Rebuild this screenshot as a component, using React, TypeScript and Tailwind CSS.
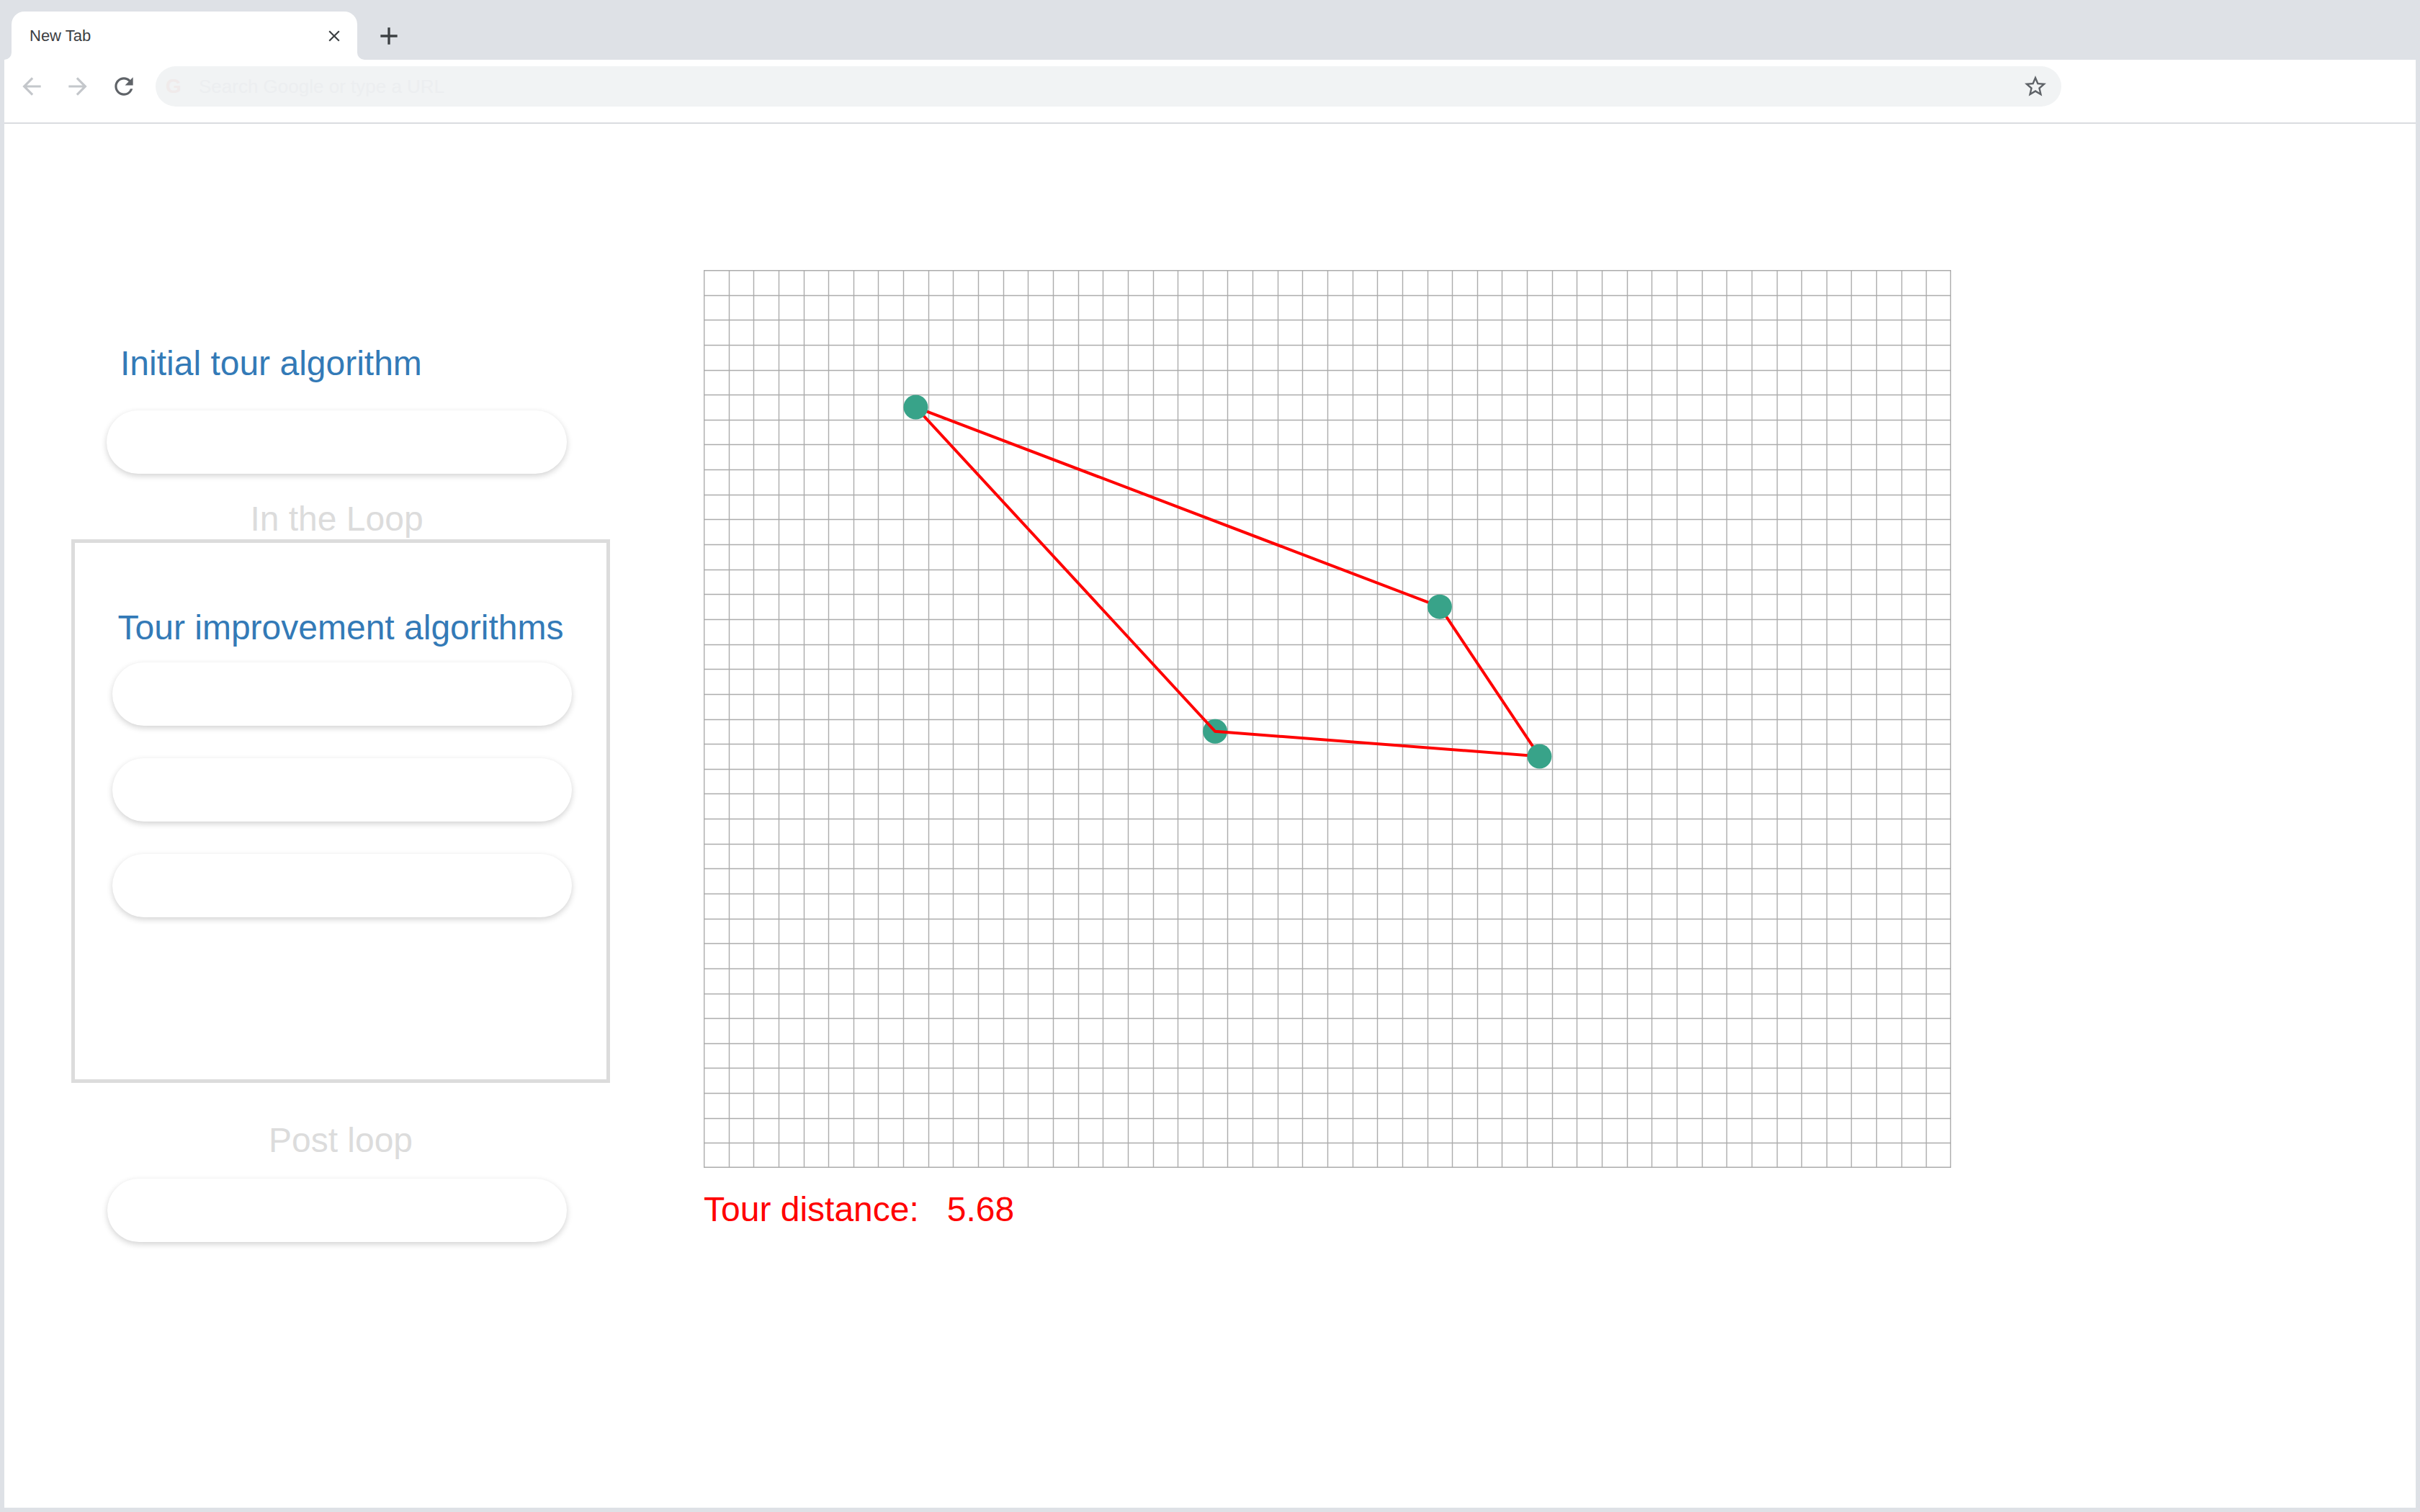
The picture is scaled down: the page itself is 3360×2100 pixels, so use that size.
import React from "react";

const W = 1732;
const H = 1247;
const COLS = 50;
const ROWS = 36;
const CW = W / COLS;
const CH = H / ROWS;

const nodes = [
  { x: 8.5, y: 5.5 },
  { x: 29.5, y: 13.5 },
  { x: 20.5, y: 18.5 },
  { x: 33.5, y: 19.5 },
];
const tour = [0, 1, 3, 2, 0];

function Grid() {
  const v = [];
  for (let i = 0; i <= COLS; i++) {
    const x = Math.min(Math.max(Math.round(i * CW) + 0.5, 0.7), W - 0.7);
    v.push(<line key={"v" + i} x1={x} y1={0} x2={x} y2={H} stroke="#acacac" strokeWidth={1.4} />);
  }
  const h = [];
  for (let j = 0; j <= ROWS; j++) {
    const y = Math.min(Math.max(Math.round(j * CH) + 0.5, 0.7), H - 0.7);
    h.push(<line key={"h" + j} x1={0} y1={y} x2={W} y2={y} stroke="#acacac" strokeWidth={1.4} />);
  }
  const px = (n: { x: number; y: number }) => [n.x * CW, n.y * CH];
  const pts = tour.map((i) => px(nodes[i]).join(",")).join(" ");
  return (
    <svg width={W} height={H} viewBox={`0 0 ${W} ${H}`} className="block">
      {v}
      {h}
      <circle cx={px(nodes[2])[0]} cy={px(nodes[2])[1]} r={17} fill="#38a389" />
      <polyline points={pts} fill="none" stroke="#ff0000" strokeWidth={4} strokeLinejoin="miter" />
      {[0, 1, 3].map((i) => (
        <circle key={i} cx={px(nodes[i])[0]} cy={px(nodes[i])[1]} r={17} fill="#38a389" />
      ))}
    </svg>
  );
}

function Pill({ className = "" }: { className?: string }) {
  return (
    <div
      className={
        "h-[88px] rounded-full bg-white shadow-[0_3px_8px_rgba(0,0,0,0.18)] " + className
      }
    />
  );
}

function Icon({ d, size, color }: { d: string; size: number; color: string }) {
  return (
    <svg width={size} height={size} viewBox="0 0 24 24" fill={color} className="block shrink-0">
      <path d={d} />
    </svg>
  );
}

const BACK = "M20 11H7.83l5.59-5.59L12 4l-8 8 8 8 1.41-1.41L7.83 13H20v-2z";
const FWD = "M12 4l-1.41 1.41L16.17 11H4v2h12.17l-5.58 5.59L12 20l8-8z";
const RELOAD =
  "M17.65 6.35A7.958 7.958 0 0012 4c-4.42 0-7.99 3.58-7.99 8s3.57 8 7.99 8c3.73 0 6.84-2.55 7.730-6h-2.08A5.99 5.99 0 0112 18c-3.31 0-6-2.69-6-6s2.69-6 6-6c1.66 0 3.14.69 4.22 1.78L13 11h7V4l-2.35 2.35z";
const STAR =
  "M22 9.24l-7.19-.62L12 2 9.19 8.63 2 9.24l5.46 4.73L5.82 21 12 17.27 18.18 21l-1.63-7.03L22 9.24zM12 15.4l-3.76 2.27 1-4.28-3.32-2.88 4.38-.38L12 6.1l1.71 4.04 4.38.38-3.32 2.88 1 4.28L12 15.4z";
const CLOSE =
  "M19 6.41L17.59 5 12 10.59 6.41 5 5 6.41 10.59 12 5 17.59 6.41 19 12 13.41 17.59 19 19 17.59 13.41 12z";
const ADD = "M19 13h-6v6h-2v-6H5v-2h6V5h2v6h6v2z";

export default function App() {
  return (
    <div className="w-[3360px] h-[2100px] bg-[#dee1e6] flex flex-col overflow-hidden font-['Liberation_Sans',Arial,sans-serif]">
      {/* Tab strip */}
      <div className="h-[83px] flex items-end pl-[16px] shrink-0">
        <div className="relative w-[480px] h-[67px] bg-white rounded-t-[18px] flex items-center pl-[25px] pr-[19px]">
          <div className="absolute left-[-10px] bottom-0 w-[10px] h-[10px] bg-white">
            <div className="w-full h-full bg-[#dee1e6] rounded-br-[10px]" />
          </div>
          <div className="absolute right-[-10px] bottom-0 w-[10px] h-[10px] bg-white">
            <div className="w-full h-full bg-[#dee1e6] rounded-bl-[10px]" />
          </div>
          <span className="text-[22px] text-[#3c4043] leading-none">New Tab</span>
          <div className="ml-auto">
            <Icon d={CLOSE} size={26} color="#3c4043" />
          </div>
        </div>
        <div className="ml-[24px] mb-[13px]">
          <Icon d={ADD} size={40} color="#3c4043" />
        </div>
      </div>

      {/* Toolbar */}
      <div className="h-[87px] mx-[6px] bg-white flex items-start pl-[19px] shrink-0">
        <div className="mt-[18px]">
          <Icon d={BACK} size={38} color="#c4c7cb" />
        </div>
        <div className="mt-[18px] ml-[26px]">
          <Icon d={FWD} size={38} color="#c4c7cb" />
        </div>
        <div className="mt-[18px] ml-[26px]">
          <Icon d={RELOAD} size={38} color="#5f6368" />
        </div>
        <div className="mt-[9px] ml-[25px] w-[2646px] h-[56px] rounded-full bg-[#f1f3f4] flex items-center pl-[14px] pr-[18px]">
          <span className="w-[30px] text-[28px] leading-none text-[#f0eaea] font-bold">G</span>
          <span className="ml-[16px] text-[26px] leading-none text-[#eceef0]">Search Google or type a URL</span>
          <div className="ml-auto">
            <Icon d={STAR} size={36} color="#5f6368" />
          </div>
        </div>
      </div>
      <div className="h-[2px] mx-[6px] bg-[#dadce0] shrink-0" />

      {/* Content */}
      <div className="flex-1 mx-[6px] mb-[6px] bg-white flex items-start">
        {/* Left column */}
        <div className="ml-[93px] w-[748px] pt-[309px] flex flex-col">
          <div className="ml-[49px] w-[639px] flex flex-col">
            <p className="pl-[19px] text-[48px] leading-none text-[#337ab7]">Initial tour algorithm</p>
            <Pill className="mt-[41px] w-[639px]" />
            <p className="mt-[39px] text-center text-[48px] leading-none text-[#dcdcdc]">In the Loop</p>
          </div>
          <div className="mt-[4px] w-[748px] h-[755px] border-[5px] border-[#dcdcdc] pt-[94px] flex flex-col">
            <p className="text-center text-[48px] leading-none text-[#337ab7]">Tour improvement algorithms</p>
            <div className="mt-[24px] ml-[52px] flex flex-col gap-[45px]">
              <Pill className="w-[638px]" />
              <Pill className="w-[638px]" />
              <Pill className="w-[638px]" />
            </div>
          </div>
          <p className="mt-[56px] text-center text-[48px] leading-none text-[#dcdcdc]">Post loop</p>
          <Pill className="mt-[29px] ml-[50px] w-[638px]" />
        </div>

        {/* Right column */}
        <div className="ml-[130px] pt-[203px] flex flex-col">
          <Grid />
          <p className="mt-[34px] text-[48px] leading-none text-[#ff0000]">
            Tour distance:<span className="ml-[39px]">5.68</span>
          </p>
        </div>
      </div>
    </div>
  );
}
